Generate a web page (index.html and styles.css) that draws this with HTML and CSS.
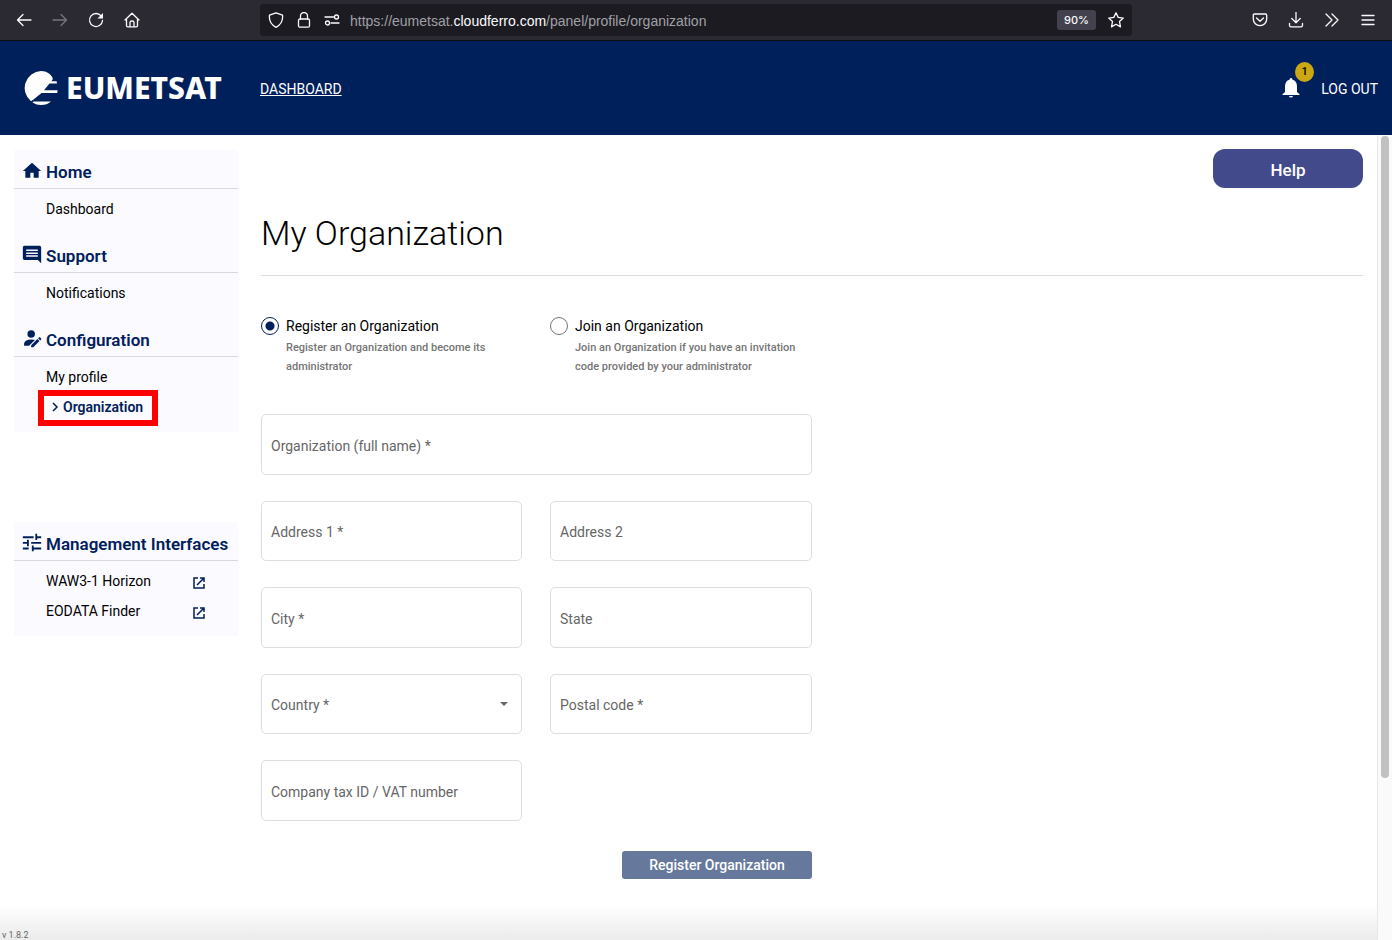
FILE: index.html
```html
<!DOCTYPE html>
<html lang="en">
<head>
<meta charset="utf-8">
<meta name="viewport" content="width=device-width, initial-scale=1">
<title>My Organization</title>
<link rel="stylesheet" href="styles.css">
</head>
<body>
<div class="browser">
  <div class="nav-buttons">
    <button class="chrome-btn" aria-label="Back"><svg viewBox="0 0 16 16"><path d="M15 8H1.500M7 2.500L1.500 8L7 13.500"/></svg></button>
    <button class="chrome-btn dim" aria-label="Forward"><svg viewBox="0 0 16 16"><path d="M1 8H14.500M9 2.500L14.500 8L9 13.500"/></svg></button>
    <button class="chrome-btn" aria-label="Reload"><svg viewBox="0 0 16 16"><path d="M13.500 4.500A6.500 6.500 0 1 0 14.500 8.500"/><path class="solid" d="M15 1V6.500H9.500Z"/></svg></button>
    <button class="chrome-btn" aria-label="Home page"><svg viewBox="0 0 16 16"><path d="M1 8L8 1.200L15 8M2.500 7V13.500Q2.500 14.800 3.800 14.800H12.200Q13.500 14.800 13.500 13.500V7M6 14.500V10.500Q6 9 8 9T10 10.500V14.500"/></svg></button>
  </div>
  <div class="address">
    <svg viewBox="0 0 16 16"><path d="M8 .8L14.500 3.200Q15.500 11.500 8 15.300Q.5 11.500 1.500 3.200Z"/></svg>
    <svg viewBox="0 0 16 16"><rect x="2.500" y="7" width="11" height="8.200" rx="1.500"/><path d="M4.500 7V4A3.500 3.500 0 0 1 11.500 4V7"/></svg>
    <svg viewBox="0 0 16 16"><path d="M1 5H9.500M7 11H15"/><circle cx="12.500" cy="5" r="2"/><circle cx="3.500" cy="11" r="2"/></svg>
    <span class="url">https://eumetsat.<b>cloudferro.com</b>/panel/profile/organization</span>
    <button class="zoom">90%</button>
    <button class="chrome-btn" aria-label="Bookmark"><svg viewBox="0 0 16 16"><path d="M8 .8L10.200 5.400L15.300 6.100L11.500 9.600L12.500 14.900L8 12.300L3.500 14.900L4.500 9.600L.7 6.100L5.800 5.400Z"/></svg></button>
  </div>
  <div class="tools">
    <button class="chrome-btn" aria-label="Pocket"><svg viewBox="0 0 16 16"><path d="M2.500 2H13.500Q14.700 2 14.700 3.200V7A6.700 6.700 0 0 1 1.300 7V3.200Q1.300 2 2.500 2ZM4.500 6L8 9.300L11.500 6"/></svg></button>
    <button class="chrome-btn" aria-label="Downloads"><svg viewBox="0 0 16 16"><path d="M8 .5V10.500M3.800 6.500L8 10.700L12.200 6.500M1.500 11.500V13.200Q1.500 14.800 3 14.800H13Q14.500 14.800 14.500 13.200V11.500"/></svg></button>
    <button class="chrome-btn" aria-label="More tools"><svg viewBox="0 0 16 16"><path d="M2 2L8 8L2 14M8 2L14 8L8 14"/></svg></button>
    <button class="chrome-btn" aria-label="Menu"><svg viewBox="0 0 16 16"><path d="M2 3.500H14M2 8H14M2 12.500H14"/></svg></button>
  </div>
</div>

<header class="header">
  <a class="logo" href="#">
    <svg class="globe" viewBox="0 0 34 34"><path d="M17 0C23 0 26.500 3 28.500 6.500C29 8.500 28.500 9 27.500 10.200H32.600L33 12.600H25.500L20 19.200H33.600L33.200 22H17.500L9.500 28.500L7 30.200A17 17 0 0 1 17 0Z"/><path d="M9.500 30.500H27Q23 34 17 34Q12.500 34 8.500 31.500Z"/></svg>
    <span>EUMETSAT</span>
  </a>
  <a class="top-link underlined" href="#">DASHBOARD</a>
  <div class="account">
    <button class="bell" aria-label="Notifications">
      <svg viewBox="0 0 18 20"><path d="M9 0Q10.500 0 10.500 1.800Q15 3 15 8.500V14L17.500 16.200V17H.5V16.200L3 14V8.500Q3 3 7.500 1.800Q7.500 0 9 0ZM7 18H11Q10.800 19.600 9 19.600T7 18Z"/></svg>
      <span class="badge">1</span>
    </button>
    <a class="top-link" href="#">LOG OUT</a>
  </div>
</header>

<div class="page">
  <aside class="sidebar">
    <nav class="panel">
      <h2><svg viewBox="0 0 24 24"><path d="M10 20v-6h4v6h6v-8h3L12 2 1 12h3v8z"/></svg>Home</h2>
      <ul><li><a href="#">Dashboard</a></li></ul>
      <h2><svg viewBox="0 0 24 24"><path d="M22.990 3c0-1.100-.890-2-1.990-2H3c-1.100 0-2 .9-2 2v13c0 1.100.9 2 2 2h16l4 4-.010-19zM19 14H5v-1.800h14V14zm0-3.300H5V8.900h14v1.800zm0-3.400H5V5.500h14v1.800z"/></svg>Support</h2>
      <ul><li><a href="#">Notifications</a></li></ul>
      <h2><svg viewBox="0 0 24 24"><circle cx="11" cy="6" r="4.500"/><path d="M2.500 20V17.500Q3.500 12.500 11 12.500Q14 12.500 15.500 13.200L9 19.500V20ZM11 22V19.500L18.500 12L21 14.500L13.500 22ZM19.300 11.200L20.500 10Q21 9.700 21.500 10L23 11.500Q23.400 12 23 12.500L21.800 13.700Z"/></svg>Configuration</h2>
      <ul>
        <li><a href="#">My profile</a></li>
        <li class="current"><a href="#" aria-current="page"><svg viewBox="0 0 8 10"><path d="M2 1L6 5L2 9"/></svg>Organization</a></li>
      </ul>
    </nav>
    <nav class="panel">
      <h2><svg viewBox="0 0 24 24"><path d="M1 17.500v2.200h7v-2.200H1zM1 4v2.200h13V4H1zm13 18v-2.300h9v-2.200h-9V15h-2.200v7H14zM6 8v2.800H1V13h5v2.800h2.200V8H6zm17 5v-2.200H11V13h12zm-7-4.500h2.200V6.200H23V4h-4.800V1H16v7.500z"/></svg>Management Interfaces</h2>
      <ul>
        <li><a class="external" href="#">WAW3-1 Horizon<svg viewBox="0 0 12 12"><path d="M5 1H1V11H11V7M7 1H11V5M11 1L4 8"/></svg></a></li>
        <li><a class="external" href="#">EODATA Finder<svg viewBox="0 0 12 12"><path d="M5 1H1V11H11V7M7 1H11V5M11 1L4 8"/></svg></a></li>
      </ul>
    </nav>
  </aside>

  <main class="content">
    <button class="help">Help</button>
    <h1>My Organization</h1>
    <form class="form">
      <div class="choice">
        <input type="radio" name="mode" id="register" aria-describedby="register-hint" checked>
        <label for="register">Register an Organization</label>
        <p id="register-hint">Register an Organization and become its administrator</p>
      </div>
      <div class="choice">
        <input type="radio" name="mode" id="join" aria-describedby="join-hint">
        <label for="join">Join an Organization</label>
        <p id="join-hint">Join an Organization if you have an invitation code provided by your administrator</p>
      </div>
      <div class="field wide"><input id="org" type="text"><label for="org">Organization (full name) *</label></div>
      <div class="field"><input id="address1" type="text"><label for="address1">Address 1 *</label></div>
      <div class="field"><input id="address2" type="text"><label for="address2">Address 2</label></div>
      <div class="field"><input id="city" type="text"><label for="city">City *</label></div>
      <div class="field"><input id="state" type="text"><label for="state">State</label></div>
      <div class="field"><select id="country"><option></option></select><label for="country">Country *</label><svg viewBox="0 0 8 4"><path d="M0 0H8L4 4Z"/></svg></div>
      <div class="field"><input id="postal" type="text"><label for="postal">Postal code *</label></div>
      <div class="field"><input id="vat" type="text"><label for="vat">Company tax ID / VAT number</label></div>
      <button class="submit" type="submit">Register Organization</button>
    </form>
  </main>
  <div class="scrollbar"><div class="thumb"></div></div>
  <footer class="version">v 1.8.2</footer>
</div>
</body>
</html>
```
FILE: styles.css
```css
*, *::after { box-sizing: border-box; }

body {
  margin: 0;
  min-height: 100vh;
  display: flex;
  flex-direction: column;
  background: #fff;
  color: #000;
  font: 14px/20px Roboto, sans-serif;
}

button { border: 0; padding: 0; background: none; color: inherit; font: inherit; }
a { color: inherit; text-decoration: none; }
h1, h2, p, ul { margin: 0; padding: 0; }
ul { list-style: none; }
svg { display: block; flex: none; }

/* Browser toolbar */
.browser {
  display: grid;
  grid-template-columns: 246px minmax(0, 872px) 1fr;
  align-items: center;
  height: 41px;
  padding-left: 14px;
  background: #2b2a33;
  border-bottom: 1px solid #0c0c0d;
  color: #fbfbfe;
}
.browser svg { width: 16px; height: 16px; fill: none; stroke: currentColor; stroke-width: 1.3; stroke-linecap: round; stroke-linejoin: round; }
.browser .solid { fill: currentColor; stroke: none; }
.nav-buttons, .tools { display: flex; gap: 16px; }
.tools { justify-content: flex-end; padding-right: 14px; }
.chrome-btn { display: grid; place-items: center; width: 20px; height: 20px; }
.dim { color: #76757c; }
.address {
  display: flex;
  align-items: center;
  gap: 12px;
  height: 32px;
  padding: 0 6px 0 8px;
  border-radius: 4px;
  background: #1c1b22;
}
.url {
  flex: 1;
  min-width: 0;
  margin-left: -2px;
  padding-top: 1px;
  overflow: hidden;
  white-space: nowrap;
  color: #a0a0a6;
  font: 14px/20px "Liberation Sans", sans-serif;
}
.url b { color: #fbfbfe; font-weight: 400; }
.zoom { width: 39px; height: 20px; margin-right: -2px; border-radius: 3px; background: #42414d; font: 500 11px/20px Inter, sans-serif; }

/* Site header */
.header {
  display: flex;
  align-items: center;
  height: 94px;
  padding: 0 14px 0 24px;
  background: #00205b;
  color: #fff;
}
.logo { display: flex; align-items: center; gap: 8px; width: 236px; font: 800 30px/34px "Noto Sans", sans-serif; }
.globe { width: 34px; height: 34px; fill: #fff; }
.top-link { padding-top: 1px; }
.underlined { text-decoration: underline; }
.account { display: flex; align-items: center; gap: 21px; margin-left: auto; }
.bell { position: relative; }
.bell svg { width: 18px; height: 20px; fill: #fff; }
.badge {
  position: absolute;
  left: 13px;
  top: -16px;
  width: 19px;
  height: 20px;
  border-radius: 50%;
  background: #cba615;
  color: #000;
  font-size: 11px;
  font-weight: 500;
  line-height: 20px;
}

/* Body */
.page {
  position: relative;
  flex: 1;
  display: grid;
  grid-template-columns: 224px minmax(0, 1fr) 15px;
  padding-left: 14px;
}
.sidebar { display: flex; flex-direction: column; gap: 90px; padding-top: 15px; }
.panel { background: #fbfaff; }
.panel h2 {
  display: flex;
  align-items: center;
  gap: 4px;
  height: 39px;
  padding: 6px 8px 0;
  border-bottom: 1px solid #d8d8de;
  color: #00205b;
  font-size: 17px;
  font-weight: 600;
  line-height: 24px;
  white-space: nowrap;
}
.panel h2 svg { width: 20px; height: 20px; margin-bottom: 2px; fill: currentColor; }
.panel ul { padding: 5px 33px 10px 32px; }
.panel li { position: relative; }
.panel li a { display: flex; align-items: center; height: 30px; }
.panel li svg { fill: none; stroke: #00205b; stroke-width: 1.5; }
.external svg { width: 12px; height: 12px; margin-top: 4px; }
.external { justify-content: space-between; }
.current a { gap: 4px; padding-left: 5px; color: #00205b; font-weight: 600; }
.current svg { width: 8px; height: 10px; }
.current::after {
  content: "";
  position: absolute;
  left: -8px;
  top: -2px;
  width: 120px;
  height: 36px;
  border: 6px solid #f00;
}

.content { display: flex; flex-direction: column; padding: 14px 14px 60px 23px; }
.help {
  align-self: flex-end;
  width: 150px;
  height: 39px;
  padding-top: 2px;
  border-radius: 12px;
  background: #434a8c;
  color: #fff;
  font-size: 17px;
  font-weight: 500;
}
h1 {
  height: 88px;
  padding-top: 24px;
  border-bottom: 1px solid #dedede;
  font-size: 34px;
  font-weight: 300;
  line-height: 42px;
}
.form {
  display: grid;
  grid-template-columns: 261fr 262fr;
  grid-template-rows: 72px 61px 60px 61px 60px 61px 32px;
  gap: 26px 28px;
  width: 100%;
  max-width: 551px;
  padding-top: 40px;
}
.choice { display: grid; grid-template-columns: 18px 1fr; gap: 0 7px; align-content: start; }
.choice input {
  appearance: none;
  width: 18px;
  height: 18px;
  margin: 1px 0;
  border: 1px solid #757575;
  border-radius: 50%;
}
.choice input:checked { border-color: #00205b; background: radial-gradient(circle, #00205b 4px, transparent 5px); }
.choice p { grid-column: 2; color: #757575; font-size: 11px; font-weight: 500; line-height: 19px; padding-top: 2px; }

.field { display: grid; align-items: center; }
.field > * { grid-area: 1 / 1; }
.wide { grid-column: 1 / -1; }
.field input, .field select {
  appearance: none;
  width: 100%;
  height: 100%;
  padding: 2px 10px 0;
  border: 1px solid #dedede;
  border-radius: 5px;
  background: #fff;
  font: inherit;
}
.field label { padding: 2px 10px 0; color: #666; pointer-events: none; }
.field svg { justify-self: end; width: 8px; height: 4px; margin-right: 14px; fill: #666; }
.submit {
  grid-row: 7;
  grid-column: 2;
  place-self: end;
  width: 190px;
  height: 28px;
  border-radius: 3px;
  background: #66799d;
  color: #fff;
  font-weight: 500;
}

.scrollbar { padding: 1px 3px; border-left: 1px solid #e8e8e8; background: #fafafa; }
.thumb { width: 8px; height: 80%; border-radius: 4px; background: #c1c1c1; }
.version {
  position: absolute;
  left: 0;
  right: 15px;
  bottom: 0;
  height: 36px;
  padding: 26px 2px 0;
  background: linear-gradient(rgba(255, 255, 255, 0), #ebebeb);
  color: #666;
  font-size: 9px;
  line-height: 10px;
  pointer-events: none;
}
```
